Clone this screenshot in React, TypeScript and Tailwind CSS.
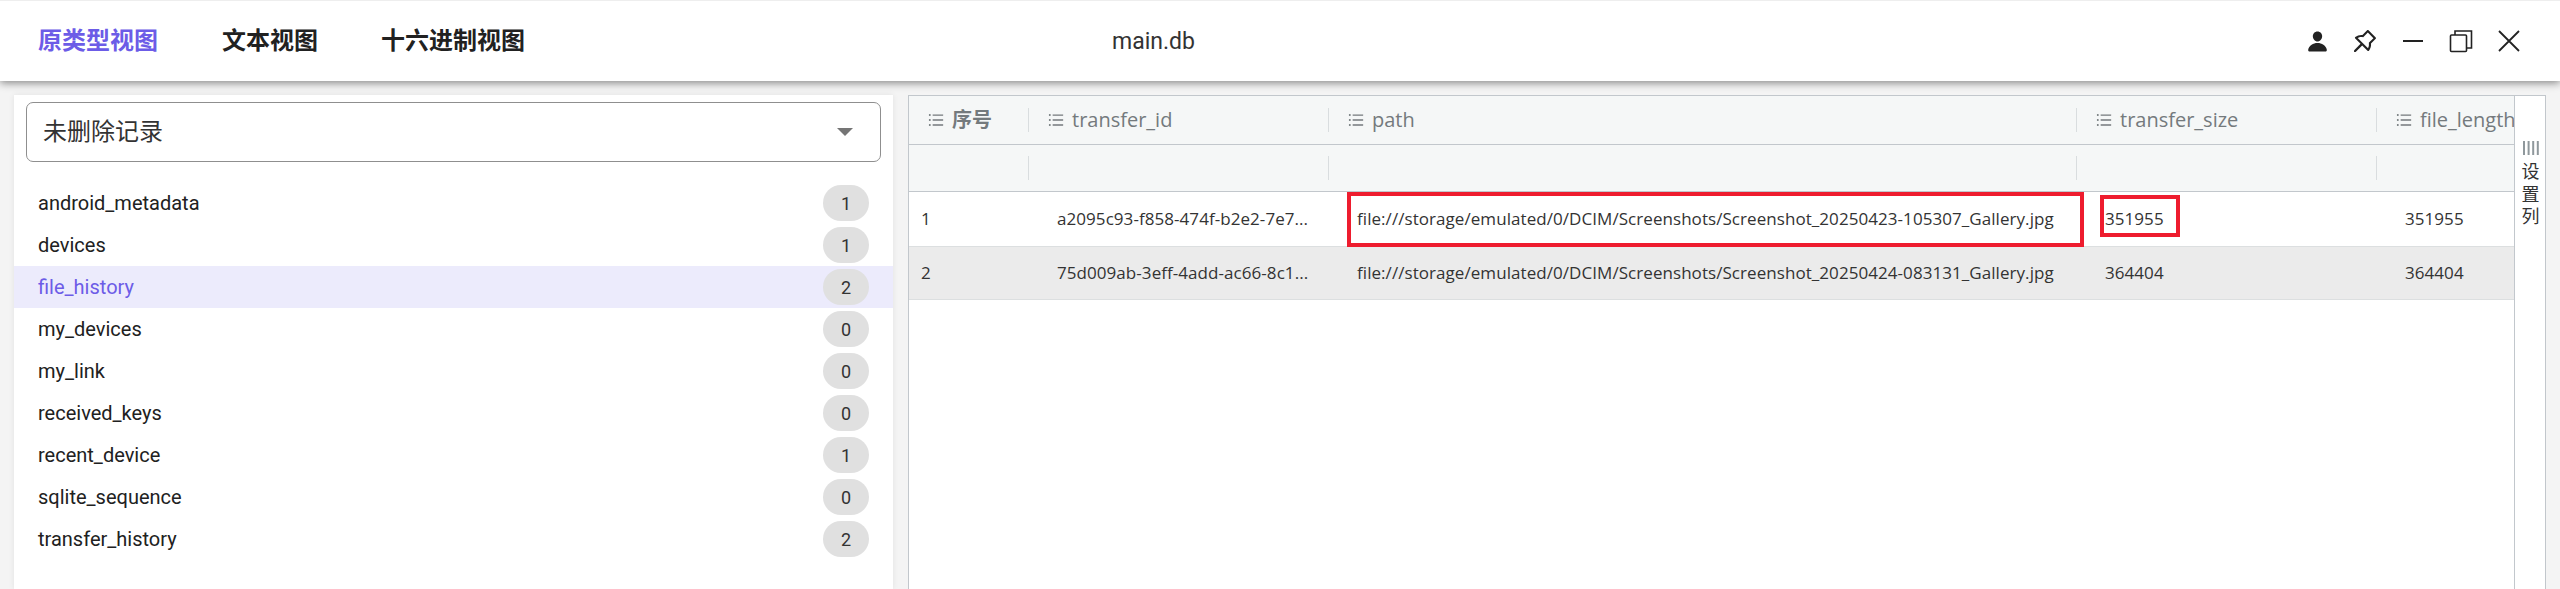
import { AiOutlinePushpin, AiOutlineUnorderedList } from "react-icons/ai";
import { IoPerson } from "react-icons/io5";

const tables = [
  { name: "android_metadata", count: 1 },
  { name: "devices", count: 1 },
  { name: "file_history", count: 2 },
  { name: "my_devices", count: 0 },
  { name: "my_link", count: 0 },
  { name: "received_keys", count: 0 },
  { name: "recent_device", count: 1 },
  { name: "sqlite_sequence", count: 0 },
  { name: "transfer_history", count: 2 },
];

const columns = [
  { label: "序号", width: "w-[120px]", bold: true },
  { label: "transfer_id", width: "w-[300px]" },
  { label: "path", width: "w-[748px]" },
  { label: "transfer_size", width: "w-[300px]" },
  { label: "file_length", width: "w-[300px]" },
];

const rows = [
  {
    id: "1",
    transferId: "a2095c93-f858-474f-b2e2-7e7...",
    path: "file:///storage/emulated/0/DCIM/Screenshots/Screenshot_20250423-105307_Gallery.jpg",
    size: "351955",
    length: "351955",
  },
  {
    id: "2",
    transferId: "75d009ab-3eff-4add-ac66-8c1...",
    path: "file:///storage/emulated/0/DCIM/Screenshots/Screenshot_20250424-083131_Gallery.jpg",
    size: "364404",
    length: "364404",
  },
];

const cjk = "font-['Roboto','Noto_Sans_CJK_SC',sans-serif]";
const tableFont = "font-['Open_Sans','Noto_Sans_CJK_SC',sans-serif]";

function TopBar() {
  return (
    <header className={`relative z-10 flex h-[81px] shrink-0 items-center border-t border-[#eeeeee] bg-white shadow-[0_2px_8px_rgba(0,0,0,0.45)] ${cjk}`}>
      <nav className="flex w-[1000px] items-center gap-[64px] pl-[38px] text-[24px] font-bold text-[#212121]">
        <span className="text-[#6c5ce7]">原类型视图</span>
        <span>文本视图</span>
        <span className="-ml-px">十六进制视图</span>
      </nav>
      <div className="absolute left-[1112px] top-[24px] text-[23px] text-[#333333]">main.db</div>
      <div className="ml-auto flex items-center pr-[27px] text-[#222222]">
        <span className="flex w-[48px] justify-center">
          <IoPerson className="h-[23px] w-[23px]" />
        </span>
        <span className="flex w-[48px] justify-center">
          <AiOutlinePushpin className="h-[30px] w-[30px]" />
        </span>
        <span className="flex w-[48px] justify-center">
          <svg className="h-[24px] w-[24px]" viewBox="0 0 24 24" fill="none" stroke="currentColor" strokeWidth="2">
            <path d="M2 12h20" />
          </svg>
        </span>
        <span className="flex w-[48px] justify-center">
          <svg className="h-[24px] w-[24px]" viewBox="0 0 24 24" fill="none" stroke="currentColor" strokeWidth="1.6">
            <rect x="1.5" y="6" width="16" height="16.5" rx="1" />
            <path d="M6 6V2h16.5v17H17.5" />
          </svg>
        </span>
        <span className="flex w-[48px] justify-center">
          <svg className="h-[24px] w-[24px]" viewBox="0 0 24 24" fill="none" stroke="currentColor" strokeWidth="1.8">
            <path d="M2 2l20 20M22 2L2 22" />
          </svg>
        </span>
      </div>
    </header>
  );
}

function Sidebar() {
  return (
    <aside className={`h-full w-[879px] shrink-0 bg-white pt-[7px] text-[#212121] shadow-[0_0_6px_rgba(0,0,0,0.08)] ${cjk}`}>
      <div className="mx-[12px] flex h-[60px] items-center justify-between rounded-[7px] border border-[#8f8f8f] pl-[16px] pr-[27px] text-[24px] text-[#333333]">
        <span>未删除记录</span>
        <span className="h-0 w-0 border-x-[8px] border-t-[8px] border-x-transparent border-t-[#757575]" />
      </div>
      <ul className="mt-[20px]">
        {tables.map((t) => (
          <li
            key={t.name}
            className={`flex h-[42px] items-center justify-between pl-[24px] pr-[24px] text-[20px] ${t.name === "file_history" ? "bg-[#ecebfc] text-[#6c5ce7]" : ""}`}
          >
            <span>{t.name}</span>
            <span className="flex h-[36px] w-[46px] items-center justify-center rounded-full bg-[#e0e0e0] text-[18px] text-[#333333]">
              {t.count}
            </span>
          </li>
        ))}
      </ul>
    </aside>
  );
}

function DataTable() {
  return (
    <section className={`relative flex h-full w-[1638px] shrink-0 border-x border-t border-[#c2c7cc] bg-white text-[#333333] ${tableFont}`}>
      <div className="min-w-0 flex-1 overflow-hidden">
        <div className="flex h-[49px] w-max border-b border-[#c2c7cc] bg-[#f5f7f7] text-[20px] text-[#747a7d]">
          {columns.map((c, i) => (
            <div key={c.label} className={`flex shrink-0 items-center pl-[18px] ${c.width}`}>
              <span className={`flex h-[24px] w-full items-center gap-[7px] ${i < columns.length - 1 ? "border-r border-[#d9dddf]" : ""}`}>
                <AiOutlineUnorderedList className="h-[18px] w-[18px] shrink-0" />
                <span className={c.bold ? "font-bold" : ""}>{c.label}</span>
              </span>
            </div>
          ))}
        </div>
        <div className="flex h-[47px] w-max border-b border-[#c2c7cc] bg-[#f5f7f7]">
          {columns.map((c, i) => (
            <div key={c.label} className={`flex shrink-0 items-center ${c.width}`}>
              <span className={`h-[24px] w-full ${i < columns.length - 1 ? "border-r border-[#d9dddf]" : ""}`} />
            </div>
          ))}
        </div>
        {rows.map((r, i) => (
          <div
            key={r.id}
            className={`flex w-max items-center border-b border-[#dcdfe0] text-[17px] tracking-[0.06px] ${i === 0 ? "h-[55px]" : "h-[53px] bg-[#ebebeb]"}`}
          >
            <div className="w-[120px] shrink-0 pl-[12px]">{r.id}</div>
            <div className="w-[300px] shrink-0 pl-[28px]">{r.transferId}</div>
            <div className="w-[748px] shrink-0 pl-[28px]">{r.path}</div>
            <div className="w-[300px] shrink-0 pl-[28px]">{r.size}</div>
            <div className="w-[300px] shrink-0 pl-[28px]">{r.length}</div>
          </div>
        ))}
      </div>
      <div className="flex w-[31px] shrink-0 flex-col items-center border-l border-[#c2c7cc] pl-px pt-[45px] text-[18px] leading-[22.5px]">
        <svg className="mb-[5px] h-[14px] w-[16px]" viewBox="0 0 16 14" fill="#8f989c">
          <rect x="0" width="2" height="14" />
          <rect x="4.6" width="2" height="14" />
          <rect x="9.2" width="2" height="14" />
          <rect x="13.8" width="2" height="14" />
        </svg>
        <span>设</span>
        <span>置</span>
        <span>列</span>
      </div>
      <div className="absolute left-[438px] top-[96px] h-[55px] w-[737px] border-4 border-[#ee1c2e]" />
      <div className="absolute left-[1191px] top-[99px] h-[42px] w-[80px] border-4 border-[#ee1c2e]" />
    </section>
  );
}

export default function App() {
  return (
    <div className="flex h-[589px] w-[2560px] flex-col overflow-hidden bg-[#f4f4f4]">
      <TopBar />
      <main className="flex min-h-0 flex-1 gap-[15px] pl-[14px] pt-[14px]">
        <Sidebar />
        <DataTable />
      </main>
    </div>
  );
}
